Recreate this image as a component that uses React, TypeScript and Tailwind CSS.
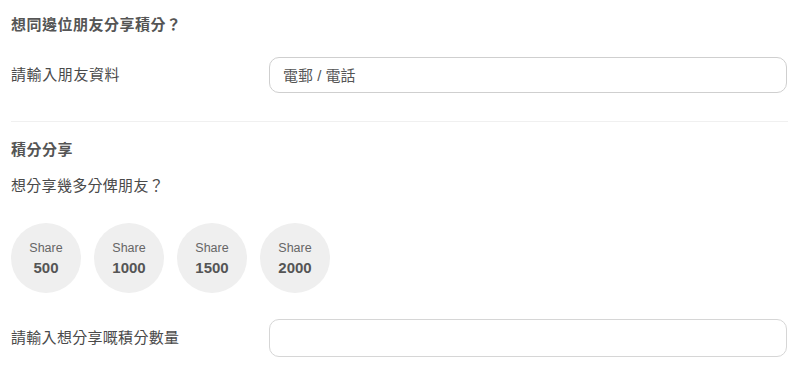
import React from 'react';

const amounts = [500, 1000, 1500, 2000];

export default function App() {
  const [selected, setSelected] = React.useState<number | null>(null);

  return (
    <div
      className="w-[800px] h-[371px] bg-white overflow-hidden pl-[11px] pr-[12px] pt-[15px] text-[#4a4a4a]"
      style={{ fontFamily: '"Liberation Sans", "Noto Sans CJK TC", sans-serif' }}
    >
      {/* Friend info */}
      <h3 className="text-[15px] leading-[20px] tracking-[0.5px] font-bold text-[#555]">想同邊位朋友分享積分？</h3>
      <div className="mt-[22px] grid grid-cols-[258px_1fr] items-center">
        <label className="text-[15px] leading-[20px] tracking-[0.6px]">請輸入朋友資料</label>
        <input
          className="h-[36px] w-[518px] rounded-[10px] border border-[#cfcfcf] px-[13px] text-[15px] outline-none placeholder:text-[#555]"
          placeholder="電郵 / 電話"
        />
      </div>

      <div className="mt-[28px] h-px bg-[#f0f0f0]" />

      {/* Points share */}
      <h3 className="mt-[18px] text-[15px] leading-[20px] tracking-[0.5px] font-bold text-[#555]">積分分享</h3>
      <p className="mt-[16px] text-[15px] leading-[20px] tracking-[0.3px]">想分享幾多分俾朋友？</p>

      <div className="mt-[27px] flex gap-[13px]">
        {amounts.map((a) => (
          <button
            key={a}
            onClick={() => setSelected(a)}
            className={
              'w-[70px] h-[70px] rounded-full flex flex-col items-center justify-center ' +
              (selected === a ? 'bg-[#e2e2e2]' : 'bg-[#efefef]')
            }
          >
            <span className="text-[12.5px] leading-[14px] text-[#666]">Share</span>
            <span className="mt-[4px] text-[15px] leading-[17px] font-bold text-[#555]">{a}</span>
          </button>
        ))}
      </div>

      <div className="mt-[26px] grid grid-cols-[258px_1fr] items-center">
        <label className="text-[15px] leading-[20px] tracking-[0.3px]">請輸入想分享嘅積分數量</label>
        <input
          className="h-[38px] w-[518px] rounded-[10px] border border-[#d6d6d6] px-[13px] text-[15px] outline-none"
          value={selected ?? ''}
          onChange={(e) => setSelected(Number(e.target.value) || null)}
        />
      </div>
    </div>
  );
}
